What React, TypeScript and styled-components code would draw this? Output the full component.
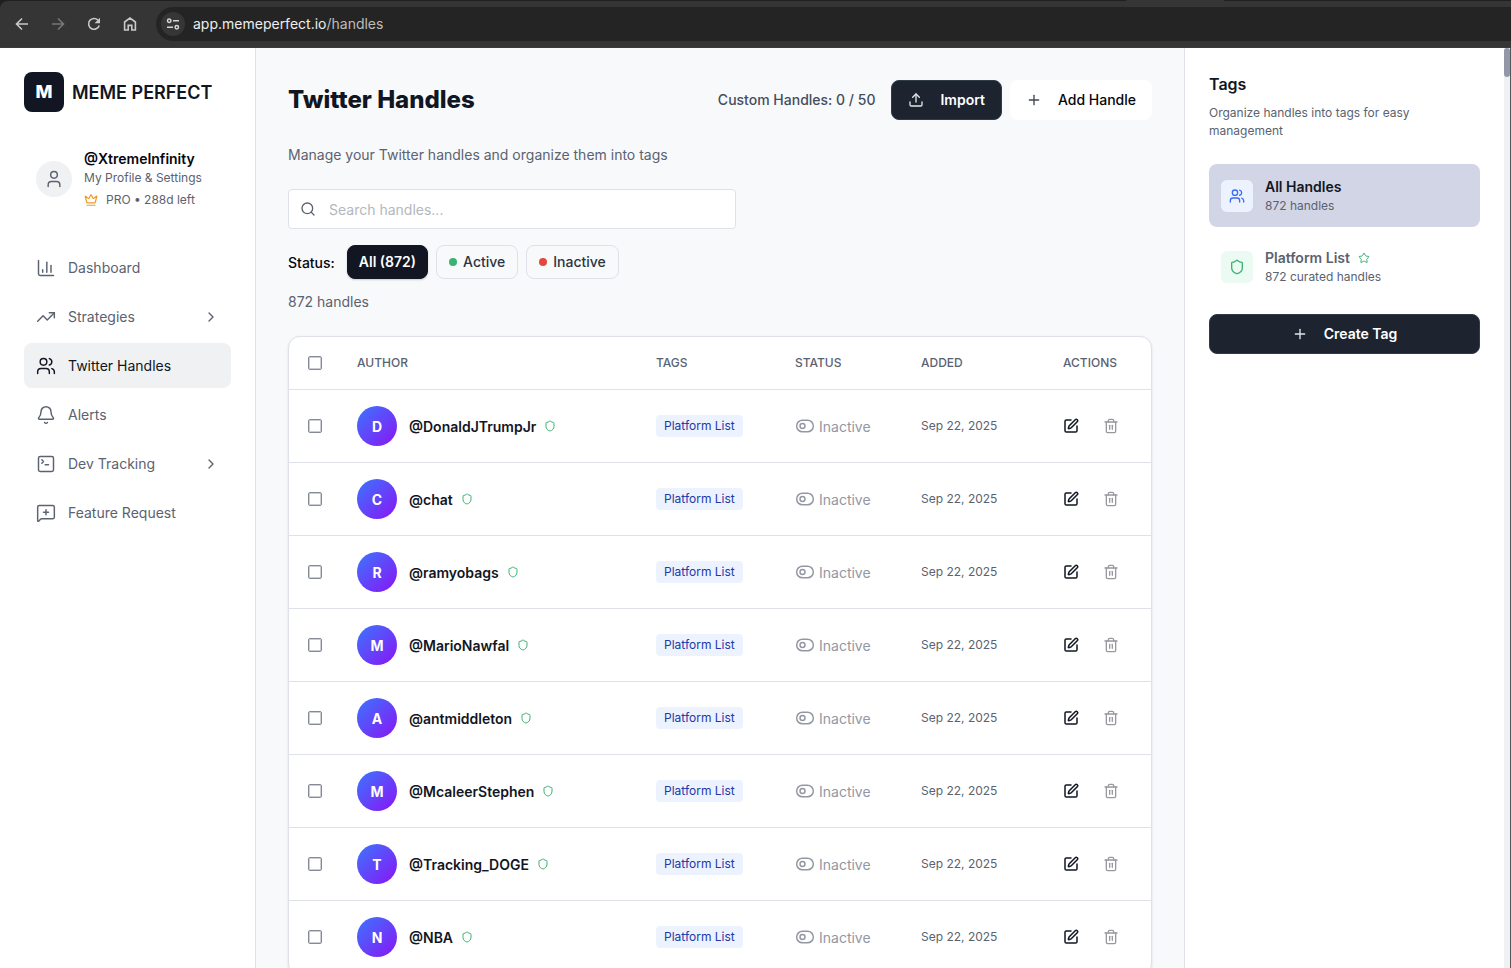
import React from 'react';
import styled, { createGlobalStyle, css } from 'styled-components';
import {
  Bell,
  ChartColumn,
  ChevronRight,
  Crown,
  MessageSquarePlus,
  Plus,
  Search,
  Shield,
  SquarePen,
  SquareTerminal,
  Star,
  ToggleLeft,
  Trash2,
  TrendingUp,
  Upload,
  User,
  Users,
} from 'lucide-react';

const color = {
  ink: '#111622',
  strong: '#05070d',
  body: '#5b6270',
  muted: '#9297a3',
  line: '#dfe1e8',
  page: '#f8f9fb',
  dark: '#1d2430',
  green: '#3bb273',
  blue: '#3b6cf6',
};

const GlobalStyle = createGlobalStyle`
  *, *::before, *::after { box-sizing: border-box; }
  html { overflow: hidden; }
  body {
    margin: 0;
    font-family: Inter, 'Liberation Sans', sans-serif;
    font-size: 14px;
    line-height: 20px;
    color: ${color.ink};
    background: #ffffff;
  }
  button, input { font: inherit; color: inherit; }
  button { border: 0; padding: 0; background: none; cursor: pointer; }
  a { color: inherit; text-decoration: none; }
  h1, h2, p, ul { margin: 0; padding: 0; }
  ul { list-style: none; }
  svg { display: block; flex-shrink: 0; }
`;

const Window = styled.div`
  display: flex;
  flex-direction: column;
  height: 100vh;
  overflow: hidden;
`;

/* Browser toolbar */

const Chrome = styled.header`
  flex-shrink: 0;
  height: 48px;
  padding-top: 1px;
  background: linear-gradient(90deg, #202020 1126px, #353535 1126px, #353535 1224px, #202020 1224px);
`;

const Toolbar = styled.div`
  display: flex;
  align-items: center;
  height: 47px;
  padding-left: 12px;
  gap: 16px;
  border-top-left-radius: 8px;
  border-bottom: 1px solid #3c3a3c;
  background: #353535;
`;

const ToolButton = styled.button<{ $dim?: boolean }>`
  display: grid;
  place-items: center;
  width: 20px;
  height: 20px;
  color: ${(p) => (p.$dim ? '#777777' : '#c9c9c9')};
`;

const AddressBar = styled.div`
  display: flex;
  align-items: center;
  flex: 1;
  gap: 8px;
  height: 34px;
  padding-left: 5px;
  border-radius: 17px 0 0 17px;
  background: #242424;
  color: #bdbdbd;
  strong { font-weight: 400; color: #eeeeee; }
`;

const SiteInfo = styled.button`
  display: grid;
  place-items: center;
  width: 24px;
  height: 24px;
  border-radius: 50%;
  background: #363636;
  color: #d5d5d5;
`;

const Layout = styled.div`
  display: flex;
  flex: 1;
  min-height: 0;
`;

/* Left navigation */

const Sidebar = styled.aside`
  flex: 0 0 256px;
  padding: 24px;
  border-right: 1px solid ${color.line};
  background: #ffffff;
`;

const Brand = styled.a`
  display: flex;
  align-items: center;
  gap: 8px;
  font-size: 18px;
  font-weight: 600;
  line-height: 28px;
`;

const BrandMark = styled.span`
  display: grid;
  place-items: center;
  width: 40px;
  height: 40px;
  border-radius: 8px;
  background: ${color.ink};
  color: #ffffff;
  font-weight: 800;
`;

/* Text set beside an icon or a round avatar, one pixel below the middle */
const SideLabel = styled.span`
  padding-top: 2px;
`;

const Profile = styled.a`
  display: flex;
  align-items: center;
  gap: 12px;
  margin-top: 36px;
  padding: 0 12px;
  font-size: 12px;
  color: ${color.body};
`;

const ProfileAvatar = styled.span`
  display: grid;
  place-items: center;
  width: 36px;
  height: 36px;
  border-radius: 50%;
  background: #f0f1f3;
`;

const ProfileText = styled.span`
  display: flex;
  flex-direction: column;
  padding-bottom: 2px;
  line-height: 16px;
  strong { font-size: 14px; font-weight: 600; line-height: 22px; color: ${color.strong}; }
`;

const Plan = styled.span`
  display: flex;
  align-items: center;
  gap: 8px;
  margin-top: 6px;
  svg { color: #f09a25; }
`;

const NavList = styled.ul`
  display: flex;
  flex-direction: column;
  gap: 4px;
  margin-top: 35px;
`;

const NavLink = styled.a<{ $active?: boolean }>`
  display: flex;
  align-items: center;
  gap: 12px;
  height: 45px;
  padding: 0 12px;
  border-radius: 8px;
  background: ${(p) => (p.$active ? '#f0f1f3' : 'transparent')};
  color: ${(p) => (p.$active ? color.ink : color.body)};
  span { flex: 1; }
`;

/* Main column */

const Main = styled.main`
  flex: 1;
  min-width: 0;
  overflow: hidden;
  padding: 32px;
  background: ${color.page};
`;

const TitleRow = styled.div`
  display: flex;
  align-items: center;
  justify-content: space-between;
  height: 40px;
`;

const Title = styled.h1`
  font-size: 24px;
  font-weight: 800;
  line-height: 32px;
`;

const Actions = styled.div`
  display: flex;
  align-items: center;
  gap: 8px;
`;

const Quota = styled.span`
  margin-right: 8px;
  font-weight: 500;
  color: #454d5b;
`;

const Button = styled.button<{ $primary?: boolean; $wide?: boolean }>`
  display: flex;
  align-items: center;
  justify-content: center;
  gap: 16px;
  width: ${(p) => (p.$wide ? '100%' : 'auto')};
  height: 40px;
  padding: 0 16px;
  border-radius: 8px;
  font-weight: ${(p) => (p.$primary ? 600 : 500)};
  ${(p) =>
    p.$primary
      ? css`
          border: 1px solid #303b48;
          background: ${color.dark};
          color: #ffffff;
          svg { color: #e4e5e8; }
        `
      : css`
          background: #ffffff;
          color: ${color.strong};
          svg { color: #3f4552; }
        `}
`;

const Intro = styled.p`
  margin-top: 25px;
  color: ${color.body};
`;

const SearchBox = styled.label`
  display: flex;
  align-items: center;
  gap: 13px;
  width: 448px;
  max-width: 100%;
  height: 40px;
  margin-top: 24px;
  padding: 0 11px;
  border: 1px solid ${color.line};
  border-radius: 4px;
  background: #ffffff;
  color: ${color.body};
  input {
    flex: 1;
    min-width: 0;
    padding: 2px 0 0;
    border: 0;
    outline: 0;
    background: none;
    color: ${color.ink};
  }
  input::placeholder { color: #b5b7bb; opacity: 1; }
`;

const FilterRow = styled.div`
  display: flex;
  align-items: center;
  gap: 8px;
  margin-top: 16px;
`;

const FilterLabel = styled(SideLabel)`
  margin-right: 4px;
  font-weight: 500;
  color: ${color.strong};
`;

const FilterButton = styled.button<{ $active?: boolean }>`
  display: flex;
  align-items: center;
  gap: 6px;
  height: 34px;
  padding: 0 ${(p) => (p.$active ? 11 : 12)}px;
  border: 1px solid ${(p) => (p.$active ? color.ink : color.line)};
  border-radius: 8px;
  background: ${(p) => (p.$active ? color.ink : color.page)};
  color: ${(p) => (p.$active ? '#ffffff' : '#2d3442')};
  box-shadow: ${(p) => (p.$active ? '0 1px 2px rgba(17, 22, 34, 0.2)' : 'none')};
  font-weight: ${(p) => (p.$active ? 600 : 500)};
`;

const Dot = styled.span<{ $color: string }>`
  width: 8px;
  height: 8px;
  border-radius: 50%;
  background: ${(p) => p.$color};
`;

const ResultCount = styled.p`
  margin-top: 13px;
  color: ${color.body};
`;

const TableCard = styled.div`
  margin-top: 24px;
  overflow: hidden;
  border: 1px solid ${color.line};
  border-radius: 12px;
  background: #ffffff;
  box-shadow: 0 1px 3px rgba(17, 22, 34, 0.1);
`;

const Table = styled.table`
  width: 100%;
  table-layout: fixed;
  border-collapse: separate;
  border-spacing: 0;
`;

const HeadCell = styled.th<{ $width?: number }>`
  width: ${(p) => (p.$width ? `${p.$width}px` : 'auto')};
  height: 53px;
  padding: 0 16px;
  border-bottom: 1px solid ${color.line};
  font-size: 12px;
  font-weight: 500;
  text-align: left;
  color: ${color.body};
`;

const Cell = styled.td`
  height: 73px;
  padding: 0 16px;
  border-bottom: 1px solid ${color.line};
`;

const Checkbox = styled.input`
  display: block;
  appearance: none;
  width: 14px;
  height: 14px;
  margin: 0 0 0 3px;
  border: 1px solid #858a98;
  border-radius: 2px;
  background: #ffffff;
  box-shadow: inset 0 0 0 1px #ccced5;
`;

const Author = styled.div`
  display: flex;
  align-items: center;
  gap: 12px;
  svg { color: ${color.green}; }
`;

const Avatar = styled.span`
  display: grid;
  place-items: center;
  width: 40px;
  height: 40px;
  padding-top: 1px;
  border-radius: 50%;
  background: linear-gradient(135deg, #3b76ff, #8a14f4);
  color: #ffffff;
  font-weight: 700;
`;

const Handle = styled.span`
  display: flex;
  align-items: center;
  gap: 8px;
  font-weight: 600;
`;

const TagChip = styled.span`
  display: inline-block;
  padding: 0 8px;
  border-radius: 4px;
  background: #ecf3ff;
  color: #2338a8;
  font-size: 12px;
  line-height: 22px;
  white-space: nowrap;
`;

const StatusButton = styled.button`
  display: flex;
  align-items: center;
  gap: 4px;
  color: ${color.muted};
`;

const Added = styled.time`
  display: block;
  font-size: 12px;
  color: ${color.body};
  white-space: nowrap;
`;

const RowActions = styled.div`
  display: flex;
  gap: 24px;
`;

const IconButton = styled.button<{ $muted?: boolean }>`
  color: ${(p) => (p.$muted ? '#98999f' : color.ink)};
`;

/* Tags panel */

const TagsPanel = styled.aside`
  flex: 0 0 320px;
  padding: 24px;
  border-left: 1px solid ${color.line};
  background: #ffffff;
`;

const PanelTitle = styled.h2`
  font-size: 16px;
  font-weight: 600;
  line-height: 24px;
`;

const PanelText = styled.p`
  margin-top: 8px;
  font-size: 12px;
  line-height: 18px;
  color: ${color.body};
`;

const TagItem = styled.button<{ $active?: boolean }>`
  display: flex;
  align-items: center;
  gap: 12px;
  width: 100%;
  height: 63px;
  padding: 0 12px;
  border-radius: 8px;
  text-align: left;
  background: ${(p) => (p.$active ? '#d2d5e6' : 'transparent')};
  color: ${(p) => (p.$active ? color.ink : color.body)};
`;

const TagList = styled.div`
  display: flex;
  flex-direction: column;
  gap: 8px;
  margin: 24px 0 16px;
`;

const TagIcon = styled.span<{ $green?: boolean }>`
  display: grid;
  place-items: center;
  width: 32px;
  height: 32px;
  border-radius: 6px;
  background: ${(p) => (p.$green ? '#ebfbf3' : '#ecf3ff')};
  color: ${(p) => (p.$green ? color.green : color.blue)};
`;

const TagText = styled.span`
  display: flex;
  flex-direction: column;
  font-size: 12px;
  line-height: 18px;
  color: ${color.body};
`;

const TagName = styled.strong<{ $active?: boolean }>`
  display: flex;
  align-items: center;
  gap: 8px;
  font-size: 14px;
  font-weight: 600;
  line-height: 20px;
  color: ${(p) => (p.$active ? color.ink : color.body)};
  svg { color: ${color.green}; }
`;

const ScrollTrack = styled.div`
  flex: 0 0 7px;
  border-right: 1px solid #55575c;
  background: #f0f1f3;
`;

const ScrollThumb = styled.div`
  height: 29px;
  border-radius: 3px;
  background: #9298a8;
`;

const navItems = [
  { label: 'Dashboard', Icon: ChartColumn },
  { label: 'Strategies', Icon: TrendingUp, expandable: true },
  { label: 'Twitter Handles', Icon: Users, active: true },
  { label: 'Alerts', Icon: Bell },
  { label: 'Dev Tracking', Icon: SquareTerminal, expandable: true },
  { label: 'Feature Request', Icon: MessageSquarePlus },
];

const handles = [
  'DonaldJTrumpJr',
  'chat',
  'ramyobags',
  'MarioNawfal',
  'antmiddleton',
  'McaleerStephen',
  'Tracking_DOGE',
  'NBA',
];

function BrowserChrome() {
  return (
    <Chrome>
      <Toolbar>
        <ToolButton aria-label="Back">
          <svg width="16" height="16" viewBox="0 0 16 16" fill="none" stroke="currentColor" strokeWidth="1.6">
            <path d="M14 8H3M8 2.5 2.5 8 8 13.5" />
          </svg>
        </ToolButton>
        <ToolButton aria-label="Forward" $dim>
          <svg width="16" height="16" viewBox="0 0 16 16" fill="none" stroke="currentColor" strokeWidth="1.6">
            <path d="M2 8h11M8 2.5 13.5 8 8 13.5" />
          </svg>
        </ToolButton>
        <ToolButton aria-label="Reload">
          <svg width="16" height="16" viewBox="0 0 16 16" fill="none" stroke="currentColor" strokeWidth="1.6">
            <path d="M13.2 9.4A5.4 5.4 0 1 1 12 4.2" />
            <path d="M14 1.8v5.4H8.6Z" fill="currentColor" stroke="none" />
          </svg>
        </ToolButton>
        <ToolButton aria-label="Home">
          <svg width="16" height="16" viewBox="0 0 16 16" fill="none" stroke="currentColor" strokeWidth="1.6">
            <path d="M2.6 14V6L8 2l5.4 4v8H9.8V9.4H6.2V14Z" />
          </svg>
        </ToolButton>
        <AddressBar>
          <SiteInfo aria-label="View site information">
            <svg width="14" height="14" viewBox="0 0 14 14" fill="none" stroke="currentColor" strokeWidth="1.5">
              <circle cx="3.2" cy="3.7" r="1.7" />
              <path d="M7 3.7h6M1 10.3h6" />
              <circle cx="10.8" cy="10.3" r="1.7" />
            </svg>
          </SiteInfo>
          <span>
            <strong>app.memeperfect.io</strong>/handles
          </span>
        </AddressBar>
      </Toolbar>
    </Chrome>
  );
}

function LeftNav() {
  return (
    <Sidebar>
      <Brand href="#">
        <BrandMark>M</BrandMark>
        <SideLabel>MEME PERFECT</SideLabel>
      </Brand>
      <Profile href="#profile">
        <ProfileAvatar>
          <User size={20} strokeWidth={1.75} />
        </ProfileAvatar>
        <ProfileText>
          <strong>@XtremeInfinity</strong>
          <span>My Profile &amp; Settings</span>
          <Plan>
            <Crown size={14} strokeWidth={2} />
            PRO • 288d left
          </Plan>
        </ProfileText>
      </Profile>
      <nav>
        <NavList>
          {navItems.map(({ label, Icon, active, expandable }) => (
            <li key={label}>
              <NavLink href="#" $active={active}>
                <Icon size={20} strokeWidth={1.75} />
                <span>{label}</span>
                {expandable && <ChevronRight size={16} strokeWidth={2} />}
              </NavLink>
            </li>
          ))}
        </NavList>
      </nav>
    </Sidebar>
  );
}

function HandlesTable() {
  return (
    <TableCard>
      <Table>
        <thead>
          <tr>
            <HeadCell $width={52}>
              <Checkbox type="checkbox" aria-label="Select all handles" />
            </HeadCell>
            <HeadCell>AUTHOR</HeadCell>
            <HeadCell $width={139}>TAGS</HeadCell>
            <HeadCell $width={126}>STATUS</HeadCell>
            <HeadCell $width={142}>ADDED</HeadCell>
            <HeadCell $width={104}>ACTIONS</HeadCell>
          </tr>
        </thead>
        <tbody>
          {handles.map((name) => (
            <tr key={name}>
              <Cell>
                <Checkbox type="checkbox" aria-label={`Select @${name}`} />
              </Cell>
              <Cell>
                <Author>
                  <Avatar>{name[0].toUpperCase()}</Avatar>
                  <Handle>
                    <SideLabel>@{name}</SideLabel>
                    <Shield size={12} strokeWidth={2} />
                  </Handle>
                </Author>
              </Cell>
              <Cell>
                <TagChip>Platform List</TagChip>
              </Cell>
              <Cell>
                <StatusButton>
                  <ToggleLeft size={20} strokeWidth={1.75} />
                  <SideLabel>Inactive</SideLabel>
                </StatusButton>
              </Cell>
              <Cell>
                <Added>Sep 22, 2025</Added>
              </Cell>
              <Cell>
                <RowActions>
                  <IconButton aria-label={`Edit @${name}`}>
                    <SquarePen size={16} strokeWidth={2.25} />
                  </IconButton>
                  <IconButton aria-label={`Delete @${name}`} $muted>
                    <Trash2 size={16} strokeWidth={2} />
                  </IconButton>
                </RowActions>
              </Cell>
            </tr>
          ))}
        </tbody>
      </Table>
    </TableCard>
  );
}

export default function App() {
  return (
    <Window>
      <GlobalStyle />
      <BrowserChrome />
      <Layout>
        <LeftNav />
        <Main>
          <TitleRow>
            <Title>Twitter Handles</Title>
            <Actions>
              <Quota>Custom Handles: 0 / 50</Quota>
              <Button $primary>
                <Upload size={16} strokeWidth={2} />
                Import
              </Button>
              <Button>
                <Plus size={16} strokeWidth={2} />
                Add Handle
              </Button>
            </Actions>
          </TitleRow>
          <Intro>Manage your Twitter handles and organize them into tags</Intro>
          <SearchBox>
            <Search size={16} strokeWidth={2} />
            <input type="text" aria-label="Search handles" placeholder="Search handles..." />
          </SearchBox>
          <FilterRow>
            <FilterLabel>Status:</FilterLabel>
            <FilterButton $active>All (872)</FilterButton>
            <FilterButton>
              <Dot $color="#3bb273" />
              Active
            </FilterButton>
            <FilterButton>
              <Dot $color="#e2483d" />
              Inactive
            </FilterButton>
          </FilterRow>
          <ResultCount>872 handles</ResultCount>
          <HandlesTable />
        </Main>
        <TagsPanel>
          <PanelTitle>Tags</PanelTitle>
          <PanelText>Organize handles into tags for easy management</PanelText>
          <TagList>
            <TagItem $active>
              <TagIcon>
                <Users size={16} strokeWidth={2} />
              </TagIcon>
              <TagText>
                <TagName $active>All Handles</TagName>
                872 handles
              </TagText>
            </TagItem>
            <TagItem>
              <TagIcon $green>
                <Shield size={16} strokeWidth={2} />
              </TagIcon>
              <TagText>
                <TagName>
                  Platform List
                  <Star size={12} strokeWidth={2} />
                </TagName>
                872 curated handles
              </TagText>
            </TagItem>
          </TagList>
          <Button $primary $wide>
            <Plus size={16} strokeWidth={2} />
            Create Tag
          </Button>
        </TagsPanel>
        <ScrollTrack>
          <ScrollThumb />
        </ScrollTrack>
      </Layout>
    </Window>
  );
}
